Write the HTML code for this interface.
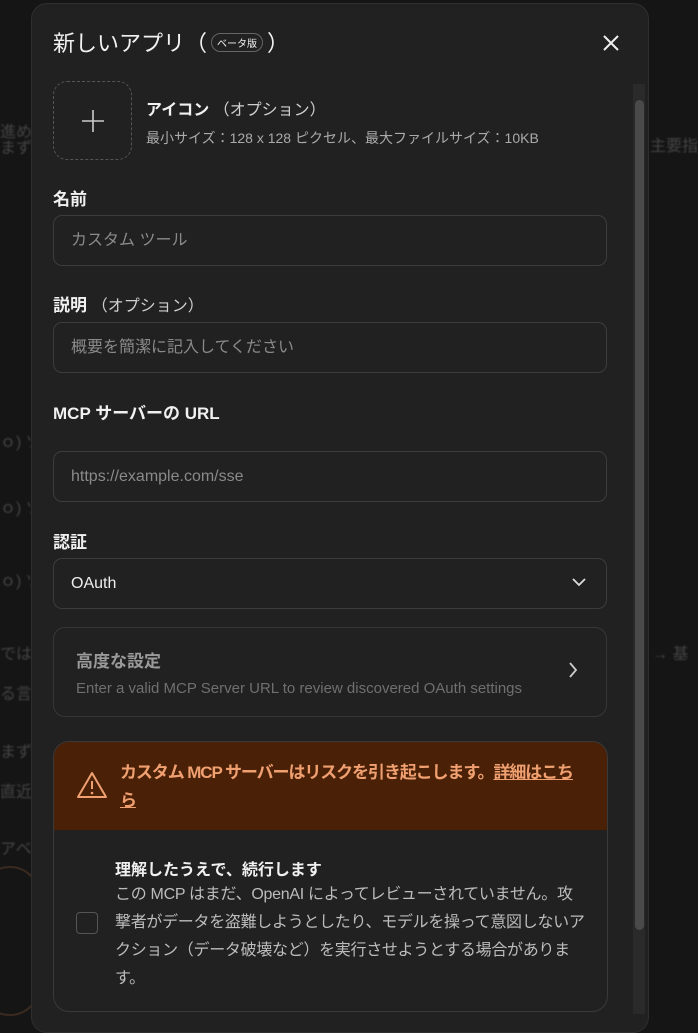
<!DOCTYPE html><html><head><meta charset="utf-8"><style>
*{box-sizing:border-box;margin:0;padding:0}
body{width:698px;height:1024px;background:#151515;font-family:"Liberation Sans","Noto Sans CJK JP",sans-serif;color:#ececec;position:relative;overflow:hidden}
.bg{position:absolute;color:#444;font-size:16px;filter:blur(0.8px)}
.modal{position:absolute;left:31px;top:3px;width:618px;height:1030px;background:#212121;border-radius:16px;border:1px solid #2e2e2e}
.a{position:absolute}
.lbl{font-size:17px;font-weight:bold;color:#f0f0f0}
.inp{position:absolute;left:21px;width:554px;height:51px;border:1px solid #3c3c3c;border-radius:9px;padding:0 17px;line-height:49px;font-size:16px;color:#8a8a8a}
.opt{font-weight:normal;color:#cfcfcf;font-size:16px}
.nw{white-space:nowrap;letter-spacing:-0.3px}
</style></head><body>
<div class="bg" style="left:0;top:118px">進め</div>
<div class="bg" style="left:0;top:134px">まず</div>
<div class="bg" style="left:650px;top:132px">主要指</div>
<div class="bg" style="left:0;top:428px">ｏ) ツ</div>
<div class="bg" style="left:0;top:494px">ｏ) ツ</div>
<div class="bg" style="left:0;top:567px">ｏ) ツ</div>
<div class="bg" style="left:0;top:640px">では、</div>
<div class="bg" style="left:0;top:680px">る言</div>
<div class="bg" style="left:652px;top:640px">→ 基</div>
<div class="bg" style="left:0;top:738px">まず</div>
<div class="bg" style="left:0;top:778px">直近</div>
<div class="bg" style="left:0;top:835px">アベン</div>
<div class="a" style="left:-20px;top:866px;width:60px;height:150px;border:2px solid #3a2a20;border-radius:30px"></div>
<div class="modal">
<div class="a" style="left:21px;top:22px;font-size:22px;color:#f2f2f2">新しいアプリ（<span style="display:inline-block;font-size:10px;border:1px solid #666;border-radius:10px;padding:1px 5px;vertical-align:4px;margin:0 4px">ベータ版</span>）</div>
<svg class="a" style="left:569px;top:29px" width="20" height="20" viewBox="0 0 20 20"><path d="M3 3L17 17M17 3L3 17" stroke="#eee" stroke-width="2"/></svg>
<div class="a" style="left:601px;top:80px;width:12px;height:930px;background:#2a2a2a"></div>
<div class="a" style="left:603px;top:96px;width:9px;height:830px;background:#4a4a4a;border-radius:5px"></div>
<div class="a" style="left:21px;top:77px;width:79px;height:79px;border:1px dashed #555;border-radius:14px"></div>
<svg class="a" style="left:49px;top:105px" width="24" height="24"><path d="M12 1V23M1 12H23" stroke="#ccc" stroke-width="1.6"/></svg>
<div class="a lbl" style="left:114px;top:92px;font-size:16px">アイコン <span class="opt">（オプション）</span></div>
<div class="a" style="left:114px;top:124px;font-size:14px;color:#aaa">最小サイズ：128 x 128 ピクセル、最大ファイルサイズ：10KB</div>
<div class="a lbl" style="left:21px;top:181px">名前</div>
<div class="inp" style="top:211px">カスタム ツール</div>
<div class="a lbl" style="left:21px;top:287px">説明 <span class="opt">（オプション）</span></div>
<div class="inp" style="top:318px">概要を簡潔に記入してください</div>
<div class="a lbl" style="left:21px;top:395px">MCP サーバーの URL</div>
<div class="inp" style="top:447px">https://example.com/sse</div>
<div class="a lbl" style="left:21px;top:524px">認証</div>
<div class="inp" style="top:554px;color:#eee">OAuth</div>
<svg class="a" style="left:539px;top:572px" width="16" height="12"><path d="M2 3L8 9L14 3" stroke="#ddd" stroke-width="1.8" fill="none"/></svg>
<div class="a" style="left:21px;top:623px;width:554px;height:90px;border:1px solid #363636;border-radius:12px"></div>
<div class="a" style="left:44px;top:643px;font-size:17px;font-weight:bold;color:#9a9a9a">高度な設定</div>
<div class="a" style="left:44px;top:676px;font-size:15px;color:#6f6f6f">Enter a valid MCP Server URL to review discovered OAuth settings</div>
<svg class="a" style="left:535px;top:657px" width="12" height="18"><path d="M3 2L9 9L3 16" stroke="#ccc" stroke-width="1.8" fill="none"/></svg>
<div class="a" style="left:21px;top:737px;width:555px;height:271px;border:1px solid #3a3a3a;border-radius:16px;overflow:hidden">
<div style="height:88px;background:#4a2007;position:relative">
<svg class="a" style="left:22px;top:28px" width="32" height="30" viewBox="0 0 32 30"><path d="M16 3L30 27H2Z" stroke="#f0a070" stroke-width="2" fill="none" stroke-linejoin="round"/><path d="M16 11V19" stroke="#f0a070" stroke-width="2"/><circle cx="16" cy="23" r="1.3" fill="#f0a070"/></svg>
<div class="a nw" style="left:66px;top:17px;font-size:17px;font-weight:bold;color:#f0a070;line-height:28px;letter-spacing:-1.1px">カスタム MCP サーバーはリスクを引き起こします。<u>詳細はこち</u><br><u>ら</u></div>
</div>
<div class="a" style="left:22px;top:170px;width:22px;height:22px;border:1px solid #555;border-radius:4px"></div>
<div class="a" style="left:61px;top:114px;font-size:16px;font-weight:bold;color:#f0f0f0">理解したうえで、続行します</div>
<div class="a nw" style="left:61px;top:139px;font-size:16px;line-height:28px;color:#bcbcbc">この MCP はまだ、OpenAI によってレビューされていません。攻<br>撃者がデータを盗難しようとしたり、モデルを操って意図しないア<br>クション（データ破壊など）を実行させようとする場合がありま<br>す。</div>
</div>
</div>
</body></html>
